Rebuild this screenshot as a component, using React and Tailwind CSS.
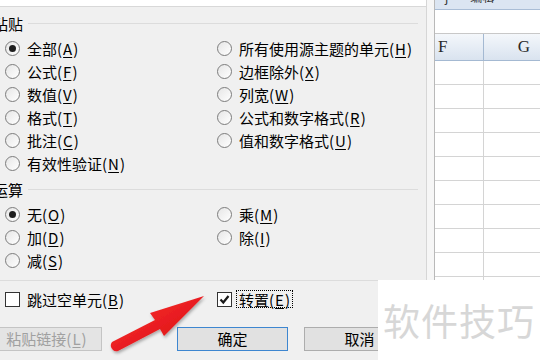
import React from "react";

const F = "font-['Noto_Sans_CJK_SC',sans-serif]";

function Key({ k }) {
  return (
    <span>
      (<span className="px-[1px] underline underline-offset-2">{k}</span>)
    </span>
  );
}

function Radio({ checked, label, k }) {
  return (
    <div className="flex h-[23px] items-center">
      <span className="flex h-[15px] w-[15px] shrink-0 items-center justify-center rounded-full border border-[#7c7c7c] bg-gradient-to-br from-[#e6e6e6] to-white">
        {checked && <span className="h-[7px] w-[7px] rounded-full bg-[#1e1e1e]" />}
      </span>
      <span className="ml-[7px] whitespace-nowrap text-[15px] leading-none text-black">
        {label}
        <Key k={k} />
      </span>
    </div>
  );
}

function Header({ label }) {
  return (
    <div className="flex h-[16px] items-center">
      <span className="-ml-[7px] whitespace-nowrap text-[15px] leading-none text-black">{label}</span>
      <div className="ml-[5px] h-px w-[390px] bg-[#dcdcdc]" />
    </div>
  );
}

function Check({ checked }) {
  return (
    <span className="flex h-[15px] w-[15px] shrink-0 items-center justify-center border border-[#333333] bg-white">
      {checked && (
        <svg width="11" height="11" viewBox="0 0 11 11">
          <path d="M1.5 5.5 L4.3 8.5 L9.5 2" fill="none" stroke="#1a1a1a" strokeWidth="2.2" />
        </svg>
      )}
    </span>
  );
}

function Dialog() {
  return (
    <div className={`w-[427px] shrink-0 border-r border-[#d6d6d6] bg-[#f0f0f0] ${F}`}>
      <div className="h-[7px] border-b border-[#d8d8d8] bg-white" />
      <div className="pt-[8px]">
        <Header label="粘贴" />
        <div className="mt-[6px] grid grid-cols-[212px_1fr] pl-[5px]">
          <div className="flex flex-col">
            <Radio checked label="全部" k="A" />
            <Radio label="公式" k="F" />
            <Radio label="数值" k="V" />
            <Radio label="格式" k="T" />
            <Radio label="批注" k="C" />
            <Radio label="有效性验证" k="N" />
          </div>
          <div className="flex flex-col">
            <Radio label="所有使用源主题的单元" k="H" />
            <Radio label="边框除外" k="X" />
            <Radio label="列宽" k="W" />
            <Radio label="公式和数字格式" k="R" />
            <Radio label="值和数字格式" k="U" />
          </div>
        </div>
        <div className="mt-[6px]">
          <Header label="运算" />
        </div>
        <div className="mt-[6px] grid grid-cols-[212px_1fr] pl-[5px]">
          <div className="flex flex-col">
            <Radio checked label="无" k="O" />
            <Radio label="加" k="D" />
            <Radio label="减" k="S" />
          </div>
          <div className="flex flex-col">
            <Radio label="乘" k="M" />
            <Radio label="除" k="I" />
          </div>
        </div>
        <div className="mt-[8px] h-px w-[418px] bg-[#dcdcdc]" />
        <div className="mt-[7px] grid h-[22px] grid-cols-[212px_1fr] items-center pl-[5px]">
          <div className="flex items-center">
            <Check />
            <span className="ml-[7px] whitespace-nowrap text-[15px] leading-none text-black">
              跳过空单元
              <Key k="B" />
            </span>
          </div>
          <div className="flex items-center">
            <Check checked />
            <span className="ml-[4px] flex h-[18px] items-center border border-dotted border-black px-[2px] whitespace-nowrap text-[15px] leading-none text-black">
              转置
              <Key k="E" />
            </span>
          </div>
        </div>
        <div className="mt-[17px] flex h-[24px]">
          <div className="-ml-[9px] flex w-[111px] shrink-0 items-center justify-center border border-[#c4c4c4] bg-[#e4e4e4] text-[15px] text-[#a0a0a0]">
            粘贴链接
            <Key k="L" />
          </div>
          <div className="ml-[75px] flex w-[111px] shrink-0 items-center justify-center border border-[#3d86d0] bg-[#e1e1e1] text-[15px] text-black">
            确定
          </div>
          <div className="ml-[16px] flex w-[111px] shrink-0 items-center justify-center border border-[#adadad] bg-[#e1e1e1] text-[15px] text-black">
            取消
          </div>
        </div>
      </div>
    </div>
  );
}

function Sheet() {
  const rows = Array.from({ length: 13 });
  return (
    <div className="min-w-0 flex-1 overflow-hidden border-l border-[#b9b9b9] bg-white">
      <div className="h-[10px] overflow-hidden border-b border-[#a9bdd6] bg-[#dbe5f2]">
        <div className="-mt-[9px] flex whitespace-nowrap pl-[10px] text-[12px] leading-[12px] text-[#333] font-['Noto_Sans_CJK_SC',sans-serif]">
          <span>j</span>
          <span className="ml-[22px]">编辑</span>
        </div>
      </div>
      <div className="h-[24px] border-b border-[#c8c8c8] bg-white" />
      <div className="flex h-[27px] border-b border-[#a4b9d2] bg-gradient-to-b from-[#f4f7fb] to-[#d9e3ef] font-['Liberation_Serif',serif] text-[17px] text-[#2a2a2a]">
        <div className="flex w-[49px] shrink-0 items-center border-r border-[#a4b9d2] pl-[3px]">F</div>
        <div className="flex w-[80px] shrink-0 items-center justify-center">G</div>
      </div>
      {rows.map((_, i) => (
        <div key={i} className="flex h-[24px] border-b border-[#d4d4d4]">
          <div className="w-[49px] shrink-0 border-r border-[#d4d4d4]" />
          <div className="flex-1" />
        </div>
      ))}
    </div>
  );
}

export default function App() {
  return (
    <div className="relative flex h-[360px] w-[540px] overflow-hidden bg-white">
      <Dialog />
      <div className="w-[7px] shrink-0 bg-[#f6f6f6]" />
      <Sheet />
      <div className="absolute left-[378px] top-[280px] flex h-[80px] w-[162px] items-center justify-center bg-white">
        <span className="font-['Noto_Sans_CJK_SC',sans-serif] text-[37px] leading-none tracking-[1px] text-[#d7d7d7]">
          软件技巧
        </span>
      </div>
      <svg className="pointer-events-none absolute left-0 top-0" width="540" height="360" viewBox="0 0 540 360">
        <defs>
          <linearGradient id="ag" x1="0" y1="0" x2="1" y2="1">
            <stop offset="0" stopColor="#ff3030" />
            <stop offset="1" stopColor="#d40d12" />
          </linearGradient>
          <filter id="sh" x="-20%" y="-20%" width="140%" height="140%">
            <feDropShadow dx="1" dy="2" stdDeviation="1.5" floodColor="#000" floodOpacity="0.3" />
          </filter>
        </defs>
        <path
          d="M204 296 L150 313 L155 320 L112 342 Q109 346 113 350 Q115 352 118 351 L160 329 L164 336 Z"
          fill="url(#ag)"
          filter="url(#sh)"
        />
      </svg>
    </div>
  );
}
